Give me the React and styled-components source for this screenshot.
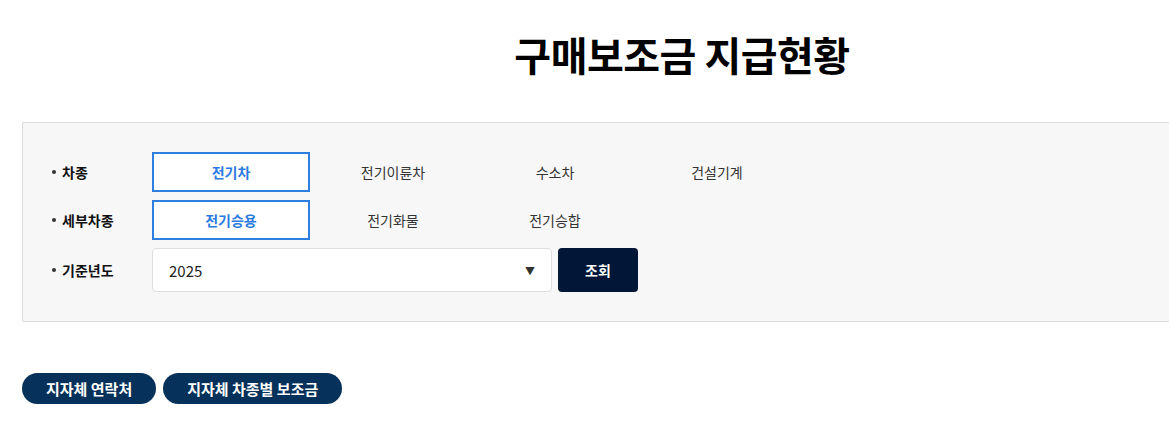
import React, { useState } from 'react';
import styled, { createGlobalStyle } from 'styled-components';

const GlobalStyle = createGlobalStyle`
  html, body {
    margin: 0;
    padding: 0;
    background: #fff;
    overflow-x: hidden;
  }
  body {
    font-family: "Noto Sans CJK KR", "Noto Sans", sans-serif;
    color: #222;
  }
`;

const Page = styled.div`
  width: 1320px;
  margin-left: 22px;
`;

const Title = styled.h2`
  margin: 0;
  padding-top: 25px;
  height: 122px;
  box-sizing: border-box;
  text-align: center;
  font-size: 40px;
  line-height: 58px;
  font-weight: 700;
  color: #000;
  letter-spacing: -0.5px;
`;

const SearchPanel = styled.div`
  display: flex;
  flex-direction: column;
  gap: 8px;
  padding: 29px 30px 29px 29px;
  background: #f7f7f7;
  border: 1px solid #dcdcdc;
`;

const Row = styled.div`
  display: flex;
  align-items: center;
`;

const Label = styled.div`
  width: 100px;
  font-size: 14px;
  font-weight: 700;
  color: #111;
  display: flex;
  align-items: center;
  gap: 6px;

  &::before {
    content: '';
    width: 4px;
    height: 4px;
    border-radius: 50%;
    background: #333;
  }
`;

const Options = styled.div`
  display: flex;
  gap: 4px;
`;

const Option = styled.button`
  width: 158px;
  height: 40px;
  box-sizing: border-box;
  border: 2px solid ${(p) => (p.$active ? '#2e7fe0' : 'transparent')};
  background: ${(p) => (p.$active ? '#fff' : 'transparent')};
  color: ${(p) => (p.$active ? '#2b7ae0' : '#333')};
  font-family: inherit;
  font-size: 14px;
  font-weight: ${(p) => (p.$active ? 700 : 400)};
  cursor: pointer;
  padding: 0;
`;

const SelectBox = styled.div`
  width: 400px;
  height: 44px;
  box-sizing: border-box;
  border: 1px solid #dedede;
  border-radius: 4px;
  background: #fff;
  display: flex;
  align-items: center;
  justify-content: space-between;
  padding: 0 16px;
  font-size: 15px;
  color: #222;
`;

const Arrow = styled.span`
  font-size: 10px;
  color: #333;
`;

const SearchButton = styled.button`
  margin-left: 6px;
  width: 80px;
  height: 44px;
  border: none;
  border-radius: 4px;
  background: #021737;
  color: #fff;
  font-family: inherit;
  font-size: 14px;
  font-weight: 700;
  cursor: pointer;
`;

const LinkBar = styled.div`
  display: flex;
  gap: 7px;
  margin-top: 51px;
`;

const PillButton = styled.button`
  height: 31px;
  padding: 0 24px;
  border: none;
  border-radius: 16px;
  background: #06315a;
  color: #fff;
  font-family: inherit;
  font-size: 15px;
  font-weight: 700;
  cursor: pointer;
`;

const CAR_TYPES = ['전기차', '전기이륜차', '수소차', '건설기계'];
const SUB_TYPES = ['전기승용', '전기화물', '전기승합'];

export default function App() {
  const [carType, setCarType] = useState('전기차');
  const [subType, setSubType] = useState('전기승용');

  return (
    <Page>
      <GlobalStyle />
      <Title>구매보조금 지급현황</Title>
      <SearchPanel>
        <Row>
          <Label>차종</Label>
          <Options>
            {CAR_TYPES.map((t) => (
              <Option key={t} $active={t === carType} onClick={() => setCarType(t)}>
                {t}
              </Option>
            ))}
          </Options>
        </Row>
        <Row>
          <Label>세부차종</Label>
          <Options>
            {SUB_TYPES.map((t) => (
              <Option key={t} $active={t === subType} onClick={() => setSubType(t)}>
                {t}
              </Option>
            ))}
          </Options>
        </Row>
        <Row>
          <Label>기준년도</Label>
          <SelectBox>
            <span>2025</span>
            <Arrow>▼</Arrow>
          </SelectBox>
          <SearchButton>조회</SearchButton>
        </Row>
      </SearchPanel>
      <LinkBar>
        <PillButton>지자체 연락처</PillButton>
        <PillButton>지자체 차종별 보조금</PillButton>
      </LinkBar>
    </Page>
  );
}
